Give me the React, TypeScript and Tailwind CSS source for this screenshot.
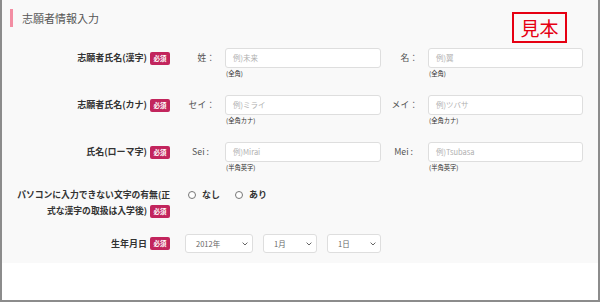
import React from 'react';

const FONT = 'font-["Noto_Sans_CJK_JP","Noto_Sans",sans-serif]';

function Badge() {
  return (
    <span className="ml-[3px] inline-flex h-[13px] w-[20px] shrink-0 items-center justify-center rounded-[2px] bg-[#c2255d] text-[6.5px] font-bold leading-none text-white">
      必須
    </span>
  );
}

interface FieldProps {
  label: string;
  labelClass?: string;
  placeholder: string;
  note: string;
  width: string;
}

function TextField({ label, labelClass = '', placeholder, note, width }: FieldProps) {
  return (
    <>
      <span
        className={`flex h-[20px] w-[29px] shrink-0 items-center justify-end text-[8.8px] text-[#555] ${labelClass}`}
      >
        {label}
      </span>
      <div className="ml-[10px] flex flex-col">
        <div
          className={`flex h-[20px] ${width} items-center rounded-[3px] border border-[#dedede] bg-white pl-[7px] text-[7.5px] text-[#b0b0b0]`}
        >
          {placeholder}
        </div>
        <span className="mt-[1px] pl-[1px] text-[6.3px] leading-[10px] text-[#333]">{note}</span>
      </div>
    </>
  );
}

function Chevron() {
  return (
    <svg width="6" height="4" viewBox="0 0 6 4" className="shrink-0">
      <path d="M0.6 0.6 L3 3 L5.4 0.6" fill="none" stroke="#555" strokeWidth="0.9" />
    </svg>
  );
}

function Select({ value, width }: { value: string; width: string }) {
  return (
    <div
      className={`flex h-[19px] ${width} items-center justify-between rounded-[3px] border border-[#dedede] bg-white pl-[10px] pr-[4px] text-[7.5px] text-[#666]`}
    >
      <span>{value}</span>
      <Chevron />
    </div>
  );
}

function Radio({ label }: { label: string }) {
  return (
    <span className="flex items-center">
      <span className="h-[8px] w-[8px] rounded-full border border-[#777] bg-white" />
      <span className="ml-[6px] text-[9px] font-semibold text-[#333]">{label}</span>
    </span>
  );
}

function Label({ children }: { children: React.ReactNode }) {
  return (
    <div className="flex h-[20px] w-[168px] shrink-0 items-center justify-end text-[9px] font-bold text-[#333]">
      {children}
    </div>
  );
}

export default function App() {
  return (
    <div className={`h-[302px] w-[600px] border-x-2 border-b-2 border-[#8c8c8c] bg-white ${FONT}`}>
      <div className="relative h-[263px] bg-[#f9f9f9]">
        {/* Header */}
        <div className="flex items-center pl-[8px] pt-[9px]">
          <span className="h-[18px] w-[3px] bg-[#f38ea3]" />
          <h1 className="ml-[9px] text-[11px] leading-[18px] text-[#555]">志願者情報入力</h1>
        </div>

        {/* 見本 stamp */}
        <div className="absolute right-[31px] top-[12px] flex h-[31px] w-[55px] items-center justify-center border-2 border-[#e60012] text-[19px] leading-none text-[#e60012]">
          見本
        </div>

        <div className="mt-[21px]">
          {/* 漢字 */}
          <div className="flex h-[47px] items-start">
            <Label>
              志願者氏名(漢字)
              <Badge />
            </Label>
            <div className="ml-[16px] flex items-start">
              <TextField label="姓：" placeholder="例)未来" note="(全角)" width="w-[156px]" />
              <div className="ml-[8px] flex items-start">
                <TextField label="名：" placeholder="例)翼" note="(全角)" width="w-[155px]" />
              </div>
            </div>
          </div>

          {/* カナ */}
          <div className="flex h-[47px] items-start">
            <Label>
              志願者氏名(カナ)
              <Badge />
            </Label>
            <div className="ml-[16px] flex items-start">
              <TextField label="セイ：" placeholder="例)ミライ" note="(全角カナ)" width="w-[156px]" />
              <div className="ml-[8px] flex items-start">
                <TextField label="メイ：" placeholder="例)ツバサ" note="(全角カナ)" width="w-[155px]" />
              </div>
            </div>
          </div>

          {/* ローマ字 */}
          <div className="flex h-[45px] items-start">
            <Label>
              氏名(ローマ字)
              <Badge />
            </Label>
            <div className="ml-[16px] flex items-start">
              <TextField label="Sei :" placeholder="例)Mirai" note="(半角英字)" width="w-[156px]" labelClass="pr-[6px]" />
              <div className="ml-[8px] flex items-start">
                <TextField label="Mei :" placeholder="例)Tsubasa" note="(半角英字)" width="w-[155px]" labelClass="pr-[5px]" />
              </div>
            </div>
          </div>

          {/* 外字 */}
          <div className="flex h-[47px] items-start">
            <div className="w-[168px] shrink-0 text-right text-[8.8px] font-bold leading-[16px] text-[#333]">
              パソコンに入力できない文字の有無(正
              <br />
              <span className="inline-flex items-center">
                式な漢字の取扱は入学後)
                <Badge />
              </span>
            </div>
            <div className="ml-[18px] flex h-[16px] items-center gap-[15px]">
              <Radio label="なし" />
              <Radio label="あり" />
            </div>
          </div>

          {/* 生年月日 */}
          <div className="flex items-start">
            <div className="flex h-[19px] w-[168px] shrink-0 items-center justify-end text-[9px] font-bold text-[#333]">
              生年月日
              <Badge />
            </div>
            <div className="ml-[15px] flex items-center gap-[10px]">
              <Select value="2012年" width="w-[68px]" />
              <Select value="1月" width="w-[54px]" />
              <Select value="1日" width="w-[54px]" />
            </div>
          </div>
        </div>
      </div>
    </div>
  );
}
